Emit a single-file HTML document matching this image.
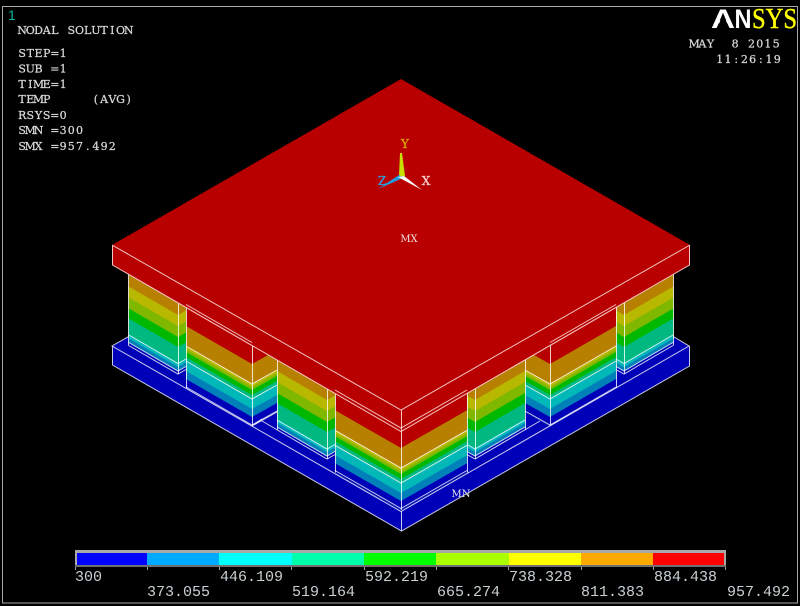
<!DOCTYPE html>
<html>
<head>
<meta charset="utf-8">
<title>NODAL SOLUTION</title>
<style>
html,body{margin:0;padding:0;background:#000;width:800px;height:606px;overflow:hidden}
svg{display:block}
.t{font-family:"DejaVu Serif","Liberation Serif",serif;font-size:11px;fill:#d8d8d8;stroke:#d8d8d8;stroke-width:.25px;text-anchor:middle}
.n{font-family:"Liberation Mono",monospace;font-size:15px;fill:#c8d0d4}
</style>
</head>
<body>
<svg width="800" height="606" viewBox="0 0 800 606" xmlns="http://www.w3.org/2000/svg">
<defs>
<g id="c">
<rect x="0" y="-71" width="1" height="71" fill="#b88000"/>
<rect x="0" y="-59" width="1" height="59" fill="#b8b800"/>
<rect x="0" y="-48" width="1" height="48" fill="#80b800"/>
<rect x="0" y="-37" width="1" height="37" fill="#00b800"/>
<rect x="0" y="-27" width="1" height="27" fill="#00b880"/>
<rect x="0" y="-11" width="1" height="11" fill="#00b8b8"/>
<rect x="0" y="-7" width="1" height="7" fill="#0080b8"/>
<rect x="0" y="-3" width="1" height="3" fill="#0000b8"/>
</g>
<g id="w">
<rect x="0" y="-90" width="1" height="90" fill="#b80000"/>
<rect x="0" y="-62" width="1" height="62" fill="#b88000"/>
<rect x="0" y="-42" width="1" height="42" fill="#b8b800"/>
<rect x="0" y="-39" width="1" height="39" fill="#80b800"/>
<rect x="0" y="-36" width="1" height="36" fill="#00b800"/>
<rect x="0" y="-31" width="1" height="31" fill="#00b880"/>
<rect x="0" y="-27" width="1" height="27" fill="#00b8b8"/>
<rect x="0" y="-17" width="1" height="17" fill="#0080b8"/>
<rect x="0" y="-9" width="1" height="9" fill="#0000b8"/>
</g>
</defs>

<rect width="800" height="606" fill="#000"/>
<rect x="2.5" y="6.5" width="795" height="596.5" fill="none" stroke="#a8a8a8"/>

<!-- base plate -->
<polygon points="112,346 401,181 689,346 689,366 401,531 112,365" fill="#0000b8"/>

<!-- walls behind columns -->
<use href="#w" transform="matrix(25,-14,0,1,252,426)"/>
<use href="#w" transform="matrix(25,14,0,1,525,412)"/>

<!-- columns -->
<use href="#c" transform="matrix(49.3,28.5,0,1,128.7,345.5)"/>
<use href="#c" transform="matrix(8,-4.5,0,1,178,374)"/>
<use href="#c" transform="matrix(49.3,-28.5,0,1,624,374)"/>
<use href="#c" transform="matrix(8,4.5,0,1,616,369.5)"/>
<use href="#c" transform="matrix(50,29,0,1,277,430)"/>
<use href="#c" transform="matrix(8,-4.5,0,1,327,459)"/>
<use href="#c" transform="matrix(50,-29,0,1,475,459)"/>
<use href="#c" transform="matrix(8,4.5,0,1,467,454.5)"/>

<!-- walls in front -->
<use href="#w" transform="matrix(66,38,0,1,186,388)"/>
<use href="#w" transform="matrix(66,-38,0,1,550,426)"/>
<use href="#w" transform="matrix(66,37.7,0,1,335,472.3)"/>
<use href="#w" transform="matrix(66,-37.7,0,1,401,510)"/>

<!-- block edge lines -->
<g fill="none" stroke="#fff" stroke-width="1" stroke-opacity=".8">
<path d="M128.5 274V345.5M178.5 303V374M186.5 307V388M252.5 345V426M277.5 359V430M327.5 388V459M335.5 393V472.5M401.5 431V510M467.5 393V472.5M475.5 388V459M525.5 359V430M550.5 345V426M616.5 307V388M624.5 303V374M673.5 274V345.5"/>
<path d="M186 346L252 384L277 370M186 361L252 399L277 385"/>
<path d="M335 430.3L401 468L467 430.3M335 445.3L401 483L467 445.3"/>
<path d="M525 370L550 384L616 346M525 385L550 399L616 361"/>
<path d="M128.7 335L178 363.5L186 359M128.7 342.5L178 371L186 366.5M128.7 345.5L178 374L186 369.5"/>
<path d="M277 420L327 449L335 444.5M277 427L327 456L335 451.5M262 421L327 459L335 454.5"/>
<path d="M467 444.5L475 449L525 420M467 451.5L475 456L525 427M467 454.5L475 459L540 421"/>
<path d="M616 359L624 363.5L673 335M616 366.5L624 371L673 342.5M616 369.5L624 374L673 345.5"/>
<path d="M186 387L252 425L277 411M335 470.5L401 508.5L467 470.5M525 411L550 425L616 387"/>
<path d="M252 426L277 412M262 419L252 426"/>
<path d="M128.7 336.5L112 346L401 511.5L689 346L673.3 336.5"/>
</g>
<g fill="none" stroke="#c8c8e8" stroke-width="1">
<path d="M112.5 346V365L401.5 531L689.5 366V346M401.5 511V531"/>
</g>

<!-- top plate -->
<polygon points="401,79 690,245 690,265 401,431 112,265 112,245" fill="#b80000"/>
<g fill="none" stroke="#f4c4c4" stroke-width="1">
<path d="M112 245L401 410L690 245M112.5 245V265L401 431.5L689.5 265V245M401.5 410V431"/>
<path d="M186 304.5L252 342.5M335 390L401 428L467 390M550 342.5L616 304.5"/>
</g>

<!-- triad -->
<polygon points="400,153 402,153 405,176 401,179 399,176" fill="#c8e000"/>
<polygon points="401,176 405,176 402,180" fill="#30b000"/>
<polygon points="378,189 399,175 403,178" fill="#1f9fe0"/>
<polygon points="398,177 404,176 422,190" fill="#fff"/>
<text x="405" y="148" font-family="'DejaVu Serif',serif" font-size="12" fill="#d8a800" stroke="#d8a800" stroke-width=".3" text-anchor="middle">Y</text>
<text x="426" y="185" font-family="'DejaVu Serif',serif" font-size="12" fill="#f4d0d0" stroke="#f4d0d0" stroke-width=".3" text-anchor="middle">X</text>
<text x="382" y="185" font-family="'DejaVu Serif',serif" font-size="12" fill="#30a0e0" stroke="#30a0e0" stroke-width=".3" text-anchor="middle">Z</text>

<text x="409" y="242" font-family="'DejaVu Serif',serif" font-size="10" fill="#f4e0e0" text-anchor="middle">MX</text>
<text x="461" y="497" font-family="'DejaVu Serif',serif" font-size="10" fill="#e8e8f0" text-anchor="middle">MN</text>

<!-- header text -->
<text x="8" y="20" font-family="'Liberation Sans',sans-serif" font-size="14" fill="#00b8a0">1</text>
<g>
<text class="t" y="34" x="22.1 30.3 38.5 46.7 54.9 63.1 71.3 79.5 87.7 95.9 104.1 112.3 120.5 128.7">NODAL SOLUTION</text>
<text class="t" y="57" x="22.1 30.3 38.5 46.7 54.9 63.1">STEP=1</text>
<text class="t" y="72.5" x="22.1 30.3 38.5 46.7 54.9 63.1">SUB =1</text>
<text class="t" y="88" x="22.1 30.3 38.5 46.7 54.9 63.1">TIME=1</text>
<text class="t" y="103" x="22.1 30.3 38.5 46.7">TEMP</text>
<text class="t" y="103" x="95.9 104.1 112.3 120.5 128.7">(AVG)</text>
<text class="t" y="119" x="22.1 30.3 38.5 46.7 54.9 63.1">RSYS=0</text>
<text class="t" y="134" x="22.1 30.3 38.5 46.7 54.9 63.1 71.3 79.5">SMN =300</text>
<text class="t" y="150" x="22.1 30.3 38.5 46.7 54.9 63.1 71.3 79.5 87.7 95.9 104.1 112.3">SMX =957.492</text>
<text class="t" y="47.5" x="694.1 702.3 710.5">MAY</text>
<text class="t" y="47.5" x="735.1 743.3 751.5 759.7 767.9 776.1">8 2015</text>
<text class="t" y="63" x="719.8 728 736.2 744.4 752.6 760.8 769 777.2">11:26:19</text>
</g>

<!-- logo -->
<text x="711" y="28" font-family="'Liberation Sans',sans-serif" font-weight="bold" font-size="27" fill="#fff" textLength="24" lengthAdjust="spacingAndGlyphs">A</text>
<polygon points="723,15 717,28 729.5,28" fill="#000"/>
<text x="734.5" y="28" font-family="'Liberation Sans',sans-serif" font-weight="bold" font-size="27" fill="#fff" textLength="17" lengthAdjust="spacingAndGlyphs">N</text>
<text x="752" y="28" font-family="'Liberation Serif',serif" font-size="28" fill="#ffff00" stroke="#ffff00" stroke-width=".4" textLength="45" lengthAdjust="spacingAndGlyphs">SYS</text>

<!-- colour bar -->
<rect x="75" y="550" width="651" height="17" fill="#a8a8a8"/>
<rect x="75" y="565" width="651" height="2" fill="#707070"/>
<rect x="77" y="553" width="70" height="12" fill="#0000ff"/>
<rect x="147" y="553" width="72" height="12" fill="#00aaff"/>
<rect x="219" y="553" width="73" height="12" fill="#00ffff"/>
<rect x="292" y="553" width="72" height="12" fill="#00ffaa"/>
<rect x="364" y="553" width="72" height="12" fill="#00ff00"/>
<rect x="436" y="553" width="73" height="12" fill="#aaff00"/>
<rect x="509" y="553" width="72" height="12" fill="#ffff00"/>
<rect x="581" y="553" width="72" height="12" fill="#ffaa00"/>
<rect x="653" y="553" width="71" height="12" fill="#ff0000"/>
<path d="M75.5 567V570M147.5 567V570M219.5 567V570M291.5 567V570M364.5 567V570M436.5 567V570M508.5 567V570M581.5 567V570M653.5 567V570M725.5 567V570" stroke="#a0a0a0" fill="none"/>

<text class="n" x="75" y="581">300</text>
<text class="n" x="147" y="596">373.055</text>
<text class="n" x="220" y="581">446.109</text>
<text class="n" x="292" y="596">519.164</text>
<text class="n" x="365" y="581">592.219</text>
<text class="n" x="437" y="596">665.274</text>
<text class="n" x="509" y="581">738.328</text>
<text class="n" x="581" y="596">811.383</text>
<text class="n" x="654" y="581">884.438</text>
<text class="n" x="727" y="596">957.492</text>
</svg>
</body>
</html>
